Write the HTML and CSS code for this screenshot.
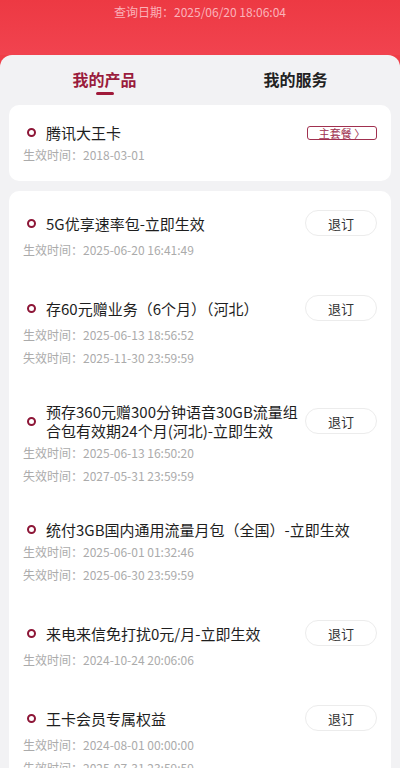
FILE: index.html
```html
<!DOCTYPE html>
<html lang="zh-CN">
<head>
<meta charset="utf-8">
<title>我的产品</title>
<link rel="stylesheet" href="styles.css">
</head>
<body>
<header class="top">
  <div class="query">查询日期：2025/06/20 18:06:04</div>
</header>
<main class="sheet">
  <nav class="tabs">
    <div class="tab active"><span class="tab-text">我的产品</span><span class="bar"></span></div>
    <div class="tab"><span class="tab-text">我的服务</span></div>
  </nav>
  <section class="list">
    <div class="card">
      <div class="item">
        <div class="row">
          <span class="dot"></span>
          <span class="title">腾讯大王卡</span>
          <span class="badge">主套餐 〉</span>
        </div>
        <div class="date">生效时间：2018-03-01</div>
      </div>
    </div>
    <div class="card">
      <div class="item">
        <div class="row has-btn">
          <span class="dot"></span>
          <span class="title">5G优享速率包-立即生效</span>
          <button class="btn">退订</button>
        </div>
        <div class="date">生效时间：2025-06-20 16:41:49</div>
      </div>
      <div class="item">
        <div class="row has-btn">
          <span class="dot"></span>
          <span class="title">存60元赠业务（6个月）（河北）</span>
          <button class="btn">退订</button>
        </div>
        <div class="date">生效时间：2025-06-13 18:56:52</div>
        <div class="date">失效时间：2025-11-30 23:59:59</div>
      </div>
      <div class="item">
        <div class="row has-btn">
          <span class="dot"></span>
          <span class="title lines">预存360元赠300分钟语音30GB流量组<br>合包有效期24个月(河北)-立即生效</span>
          <button class="btn">退订</button>
        </div>
        <div class="date">生效时间：2025-06-13 16:50:20</div>
        <div class="date">失效时间：2027-05-31 23:59:59</div>
      </div>
      <div class="item">
        <div class="row">
          <span class="dot"></span>
          <span class="title">统付3GB国内通用流量月包（全国）-立即生效</span>
        </div>
        <div class="date">生效时间：2025-06-01 01:32:46</div>
        <div class="date">失效时间：2025-06-30 23:59:59</div>
      </div>
      <div class="item">
        <div class="row has-btn">
          <span class="dot"></span>
          <span class="title">来电来信免打扰0元/月-立即生效</span>
          <button class="btn">退订</button>
        </div>
        <div class="date">生效时间：2024-10-24 20:06:06</div>
      </div>
      <div class="item">
        <div class="row has-btn">
          <span class="dot"></span>
          <span class="title">王卡会员专属权益</span>
          <button class="btn">退订</button>
        </div>
        <div class="date">生效时间：2024-08-01 00:00:00</div>
        <div class="date">失效时间：2025-07-31 23:59:59</div>
      </div>
    </div>
  </section>
</main>
</body>
</html>
```
FILE: styles.css
```css
* { box-sizing: border-box; }
html, body {
  margin: 0;
  padding: 0;
}
body {
  width: 400px;
  height: 768px;
  overflow: hidden;
  background: #ef3d47;
  font-family: "Noto Sans CJK SC", "Noto Sans", sans-serif;
  color: #222;
}
.top {
  height: 55px;
  padding-top: 3px;
  background: linear-gradient(180deg, #ed3943 0%, #f1434f 100%);
}
.query {
  text-align: center;
  font-size: 12px;
  line-height: 18px;
  color: rgba(255, 220, 224, 0.75);
}
.sheet {
  background: #f2f2f4;
  border-radius: 12px 12px 0 0;
  min-height: 713px;
}
.tabs {
  display: grid;
  grid-template-columns: 1fr 1fr;
  margin: 0 9px;
  padding-top: 13px;
}
.tab {
  display: flex;
  flex-direction: column;
  align-items: center;
}
.tab-text {
  font-size: 16px;
  line-height: 22px;
  font-weight: 700;
  color: #222;
}
.tab.active .tab-text { color: #9a1c3c; }
.bar {
  width: 18px;
  height: 3px;
  margin-top: 2px;
  border-radius: 2px;
  background: #a01a3a;
}
.list {
  display: flex;
  flex-direction: column;
  gap: 10px;
  padding: 10px 9px 0;
}
.card {
  background: #fff;
  border-radius: 10px;
}
.item {
  padding: 18px 14px 16px 14px;
}
.row {
  display: flex;
  align-items: center;
  gap: 10px;
  padding-left: 4px;
}
.row.has-btn { min-height: 28px; }
.dot {
  flex: none;
  width: 9px;
  height: 9px;
  border: 2px solid #8d1637;
  border-radius: 50%;
}
.title {
  flex: 1;
  min-width: 0;
  font-size: 15px;
  line-height: 19px;
  color: #1e1e1e;
}
.title.lines { white-space: nowrap; }
.badge {
  flex: none;
  width: 70px;
  height: 14px;
  border: 1px solid #a0304f;
  border-radius: 3px;
  font-size: 11px;
  line-height: 12px;
  text-align: center;
  color: #a0304f;
}
.btn {
  flex: none;
  width: 72px;
  height: 26px;
  padding: 0;
  border: 1px solid #ececec;
  border-radius: 13px;
  background: #fff;
  font-family: inherit;
  font-size: 13px;
  color: #333;
}
.date {
  margin-top: 3px;
  font-size: 12px;
  line-height: 20px;
  color: #ababab;
}
```
